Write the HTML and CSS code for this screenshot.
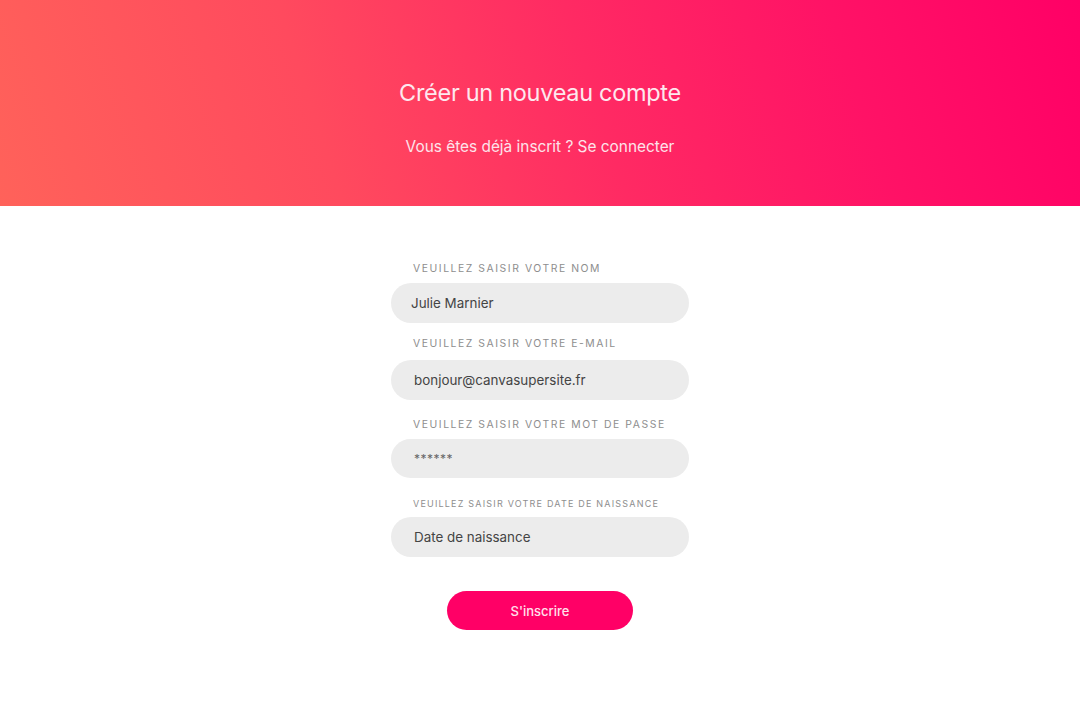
FILE: index.html
```html
<!DOCTYPE html>
<html lang="fr">
<head>
<meta charset="utf-8">
<title>Créer un nouveau compte</title>
<link rel="stylesheet" href="styles.css">
</head>
<body>
<header class="hero">
  <h1 class="hero-title">Créer un nouveau compte</h1>
  <p class="hero-sub">Vous êtes déjà inscrit ? Se connecter</p>
</header>
<main class="form">
  <div class="field field-1">
    <label class="label">VEUILLEZ SAISIR VOTRE NOM</label>
    <div class="input input-first">Julie Marnier</div>
  </div>
  <div class="field field-2">
    <label class="label">VEUILLEZ SAISIR VOTRE E-MAIL</label>
    <div class="input">bonjour@canvasupersite.fr</div>
  </div>
  <div class="field field-3">
    <label class="label">VEUILLEZ SAISIR VOTRE MOT DE PASSE</label>
    <div class="input input-pass">******</div>
  </div>
  <div class="field field-4">
    <label class="label label-small">VEUILLEZ SAISIR VOTRE DATE DE NAISSANCE</label>
    <div class="input">Date de naissance</div>
  </div>
  <button class="btn">S'inscrire</button>
</main>
</body>
</html>
```
FILE: styles.css
```css
* { box-sizing: border-box; }
html, body { margin: 0; padding: 0; }
body {
  width: 1080px;
  height: 720px;
  background: #ffffff;
  font-family: "Inter", "DejaVu Sans", sans-serif;
  overflow: hidden;
}
.hero {
  height: 206px;
  background: linear-gradient(72deg, #ff625a 0%, #ff4a5e 30%, #ff2a63 55%, #ff1266 78%, #ff0066 100%);
  display: flex;
  flex-direction: column;
  align-items: center;
  color: #fde8ee;
}
.hero-title {
  margin: 77px 0 0;
  font-weight: 400;
  font-size: 23.5px;
  line-height: 32px;
  letter-spacing: -0.3px;
}
.hero-sub {
  margin: 28px 0 0;
  font-size: 15.4px;
  line-height: 20px;
  font-weight: 400;
  color: #fde3ea;
}
.form {
  display: flex;
  flex-direction: column;
  align-items: center;
  padding-top: 56px;
}
.field {
  width: 298px;
  display: flex;
  flex-direction: column;
}
.label {
  padding-left: 22px;
  font-size: 10.4px;
  line-height: 14px;
  letter-spacing: 1.55px;
  color: #8e8e8e;
}
.label-small {
  font-size: 9px;
  letter-spacing: 1.2px;
}
.input {
  height: 40px;
  border-radius: 20px;
  background: #ececec;
  display: flex;
  align-items: center;
  padding-left: 23px;
  font-size: 13.4px;
  color: #444;
}
.input-first { padding-left: 20px; }
.input-pass { color: #666; font-size: 12px; letter-spacing: 0.5px; }
.field-1 .input { margin-top: 7px; }
.field-2 { margin-top: 14px; }
.field-2 .input { margin-top: 9px; }
.field-3 { margin-top: 18px; }
.field-3 .input { margin-top: 7px; height: 39px; }
.field-4 { margin-top: 19px; }
.field-4 .input { margin-top: 6px; }
.btn {
  margin-top: 34px;
  width: 186px;
  height: 39px;
  border: none;
  border-radius: 20px;
  background: #ff0066;
  color: #ffe0ec;
  font-family: "Inter", "DejaVu Sans", sans-serif;
  font-size: 13px;
  font-weight: 500;
}
```
